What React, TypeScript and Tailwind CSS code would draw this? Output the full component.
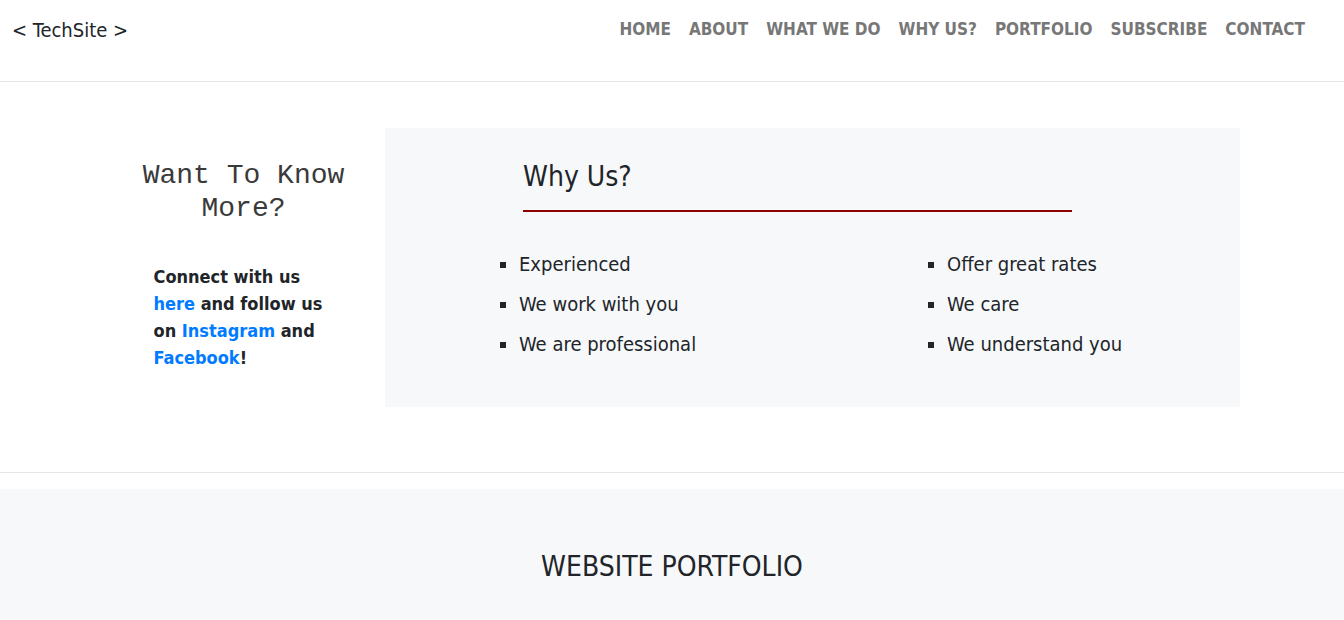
import React from 'react';

const NAV = ['HOME', 'ABOUT', 'WHAT WE DO', 'WHY US?', 'PORTFOLIO', 'SUBSCRIBE', 'CONTACT'];
const LEFT = ['Experienced', 'We work with you', 'We are professional'];
const RIGHT = ['Offer great rates', 'We care', 'We understand you'];

const App: React.FC = () => {
  return (
    <div className="min-h-screen bg-white text-[#212529] font-['DejaVu_Sans_Condensed','DejaVu_Sans',sans-serif]">
      {/* Header */}
      <header className="h-[82px] border-b border-[#e5e5e5] flex items-start justify-between">
        <a className="pl-[12px] pt-[18px] text-[20px] leading-[24px] text-[#212529]">&lt; TechSite &gt;</a>
        <nav className="flex gap-[18px] pr-[39px] pt-[18px]">
          {NAV.map((item) => (
            <a key={item} className="text-[17px] leading-[22px] font-bold text-[#777777]">
              {item}
            </a>
          ))}
        </nav>
      </header>

      {/* Why us */}
      <section className="h-[391px] border-b border-[#e5e5e5] pt-[46px]">
        <div className="w-[1140px] mx-auto flex">
          <div className="w-[283px] flex flex-col items-center">
            <h3 className="mt-[31px] text-[28px] leading-[33px] text-center font-['Liberation_Mono',monospace] text-[#3a3a3a]">
              Want To Know
              <br />
              More?
            </h3>
            <p className="mt-[38px] w-[180px] text-[18px] leading-[27px] font-bold text-[#212529]">
              Connect with us <a className="text-[#007bff]">here</a> and follow us on{' '}
              <a className="text-[#007bff]">Instagram</a> and <a className="text-[#007bff]">Facebook</a>!
            </p>
          </div>
          <div className="w-[855px] h-[279px] bg-[#f7f8fa] pt-[32px]">
            <h2 className="ml-[138px] text-[28px] leading-[34px] text-[#212529]">Why Us?</h2>
            <div className="ml-[138px] mt-[16px] w-[549px] h-[2px] bg-[#8b0000]" />
            <div className="flex mt-[40px] ml-[134px]">
              <ul className="w-[428px] list-[square]">
                {LEFT.map((t) => (
                  <li key={t} className="text-[20px] leading-[24px] mb-[16px]">
                    {t}
                  </li>
                ))}
              </ul>
              <ul className="list-[square]">
                {RIGHT.map((t) => (
                  <li key={t} className="text-[20px] leading-[24px] mb-[16px]">
                    {t}
                  </li>
                ))}
              </ul>
            </div>
          </div>
        </div>
      </section>

      {/* Portfolio */}
      <section className="mt-[16px] bg-[#f7f8fa] pt-[61px] pb-[80px]">
        <h2 className="text-center text-[28px] leading-[34px] text-[#212529]">WEBSITE PORTFOLIO</h2>
      </section>
    </div>
  );
};

export default App;
